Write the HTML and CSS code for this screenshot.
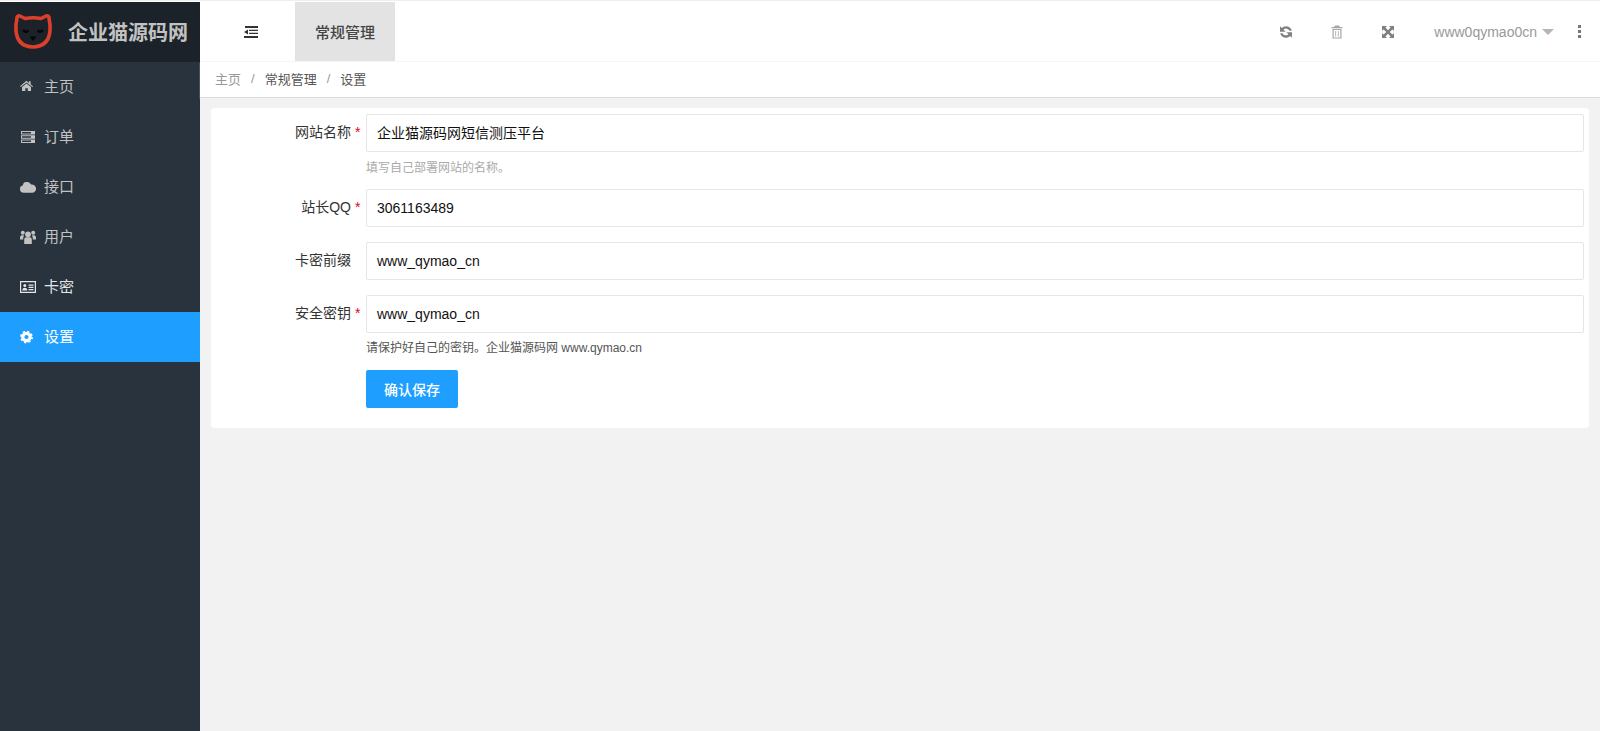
FILE: index.html
```html
<!DOCTYPE html>
<html lang="zh-CN">
<head>
<meta charset="utf-8">
<title>设置</title>
<link rel="stylesheet" href="styles.css">
</head>
<body>
<div class="app">
  <aside class="side">
    <div class="logo">
      <svg class="cat" viewBox="0 0 40 36" width="40" height="36"><path d="M4 5 Q4 2.500 7 3 L12 5.500 Q20 4 28 5.500 L33 3 Q36 2.500 36 5 Q37.500 12 37 18 Q35.500 33.500 20 34 Q4.500 33.500 3 18 Q2.500 12 4 5Z" fill="#1d2228" stroke="#dc3f2c" stroke-width="3.600" stroke-linejoin="round"/><path d="M10 17q2.500 3 5.500 .5M24.500 17.500q3 2.500 5.500 -.5" stroke="#05070a" stroke-width="2.600" fill="none"/><path d="M16.500 23.500h7l-3.500 4.500z" fill="#05070a"/></svg>
      <span class="logo-text">企业猫源码网</span>
    </div>
    <nav class="menu">
      <a class="item"><svg class="mi" viewBox="0 0 19.600 17.100" preserveAspectRatio="xMinYMid"><path d="M8 1L0 7.500l.8 1L8 3l7.200 5.500.8-1-3-2.400V1.500h-2v2z"/><path d="M8 4.200L2.500 8.700V13.500h4V10h3v3.500h4V8.700z"/></svg><span>主页</span></a>
      <a class="item"><svg class="mi" viewBox="0 0 16 14"><path fill-rule="evenodd" d="M1 1h14v3.600H1zM1 5.200h14v3.600H1zM1 9.400h14V13H1zM2 2v1.600h9V2zM2 6.200v1.600h9V6.200zM2 10.400V12h9v-1.600z"/></svg><span>订单</span></a>
      <a class="item"><svg class="mi" viewBox="0 0 16 14"><path d="M3.800 12.800a3.800 3.800 0 0 1-.9-7.500 3.600 3.600 0 0 1 4-3.300 4.200 4.200 0 0 1 4.200 2.500 4.200 4.200 0 0 1 1.500 8.300z"/></svg><span>接口</span></a>
      <a class="item"><svg class="mi" viewBox="0 0 16 14"><circle cx="8" cy="4.300" r="2.900"/><circle cx="2.800" cy="2.800" r="2"/><circle cx="13.200" cy="2.800" r="2"/><path d="M4.200 14V9.500q0-2.300 2-2.300h3.600q2 0 2 2.300V14zM0 8q0-2.800 2-2.800h2L3.200 8v1.500H0zM16 8q0-2.800-2-2.800h-2l.8 2.800v1.500H16z"/></svg><span>用户</span></a>
      <a class="item hot"><svg class="mi" viewBox="0 0 16 14"><path fill-rule="evenodd" d="M0 1h16v12H0zM1.200 2.200v9.600h13.600V2.200z"/><circle cx="4.800" cy="5.400" r="1.500"/><path d="M2.300 10.500q0-2.800 2.500-2.800t2.500 2.800zM8.500 4.500h5v1.200h-5zM8.500 6.800h5V8h-5zM8.500 9.100h5v1.200h-5z"/></svg><span>卡密</span></a>
      <a class="item active"><svg class="mi gear" viewBox="0 0 16 14"><circle cx="6.500" cy="7" r="3.700" stroke-width="3.200"/><circle cx="6.500" cy="7" r="5.600" stroke-width="1.600" stroke-dasharray="2.200 2.200"/></svg><span>设置</span></a>
    </nav>
  </aside>
  <main class="main">
    <header class="top">
      <div class="top-left">
        <div class="flex-btn"><svg viewBox="0 0 14 12" width="14" height="12"><path d="M1 0h13v2H1zM5 3.700h9v1.300H5zM5 6.700h9v1.300H5zM0 10h14v2H0zM4 3.500v5L0 6z" fill="#333"/></svg></div>
        <div class="tab">常规管理</div>
      </div>
      <div class="top-right">
        <span class="tool t1"><svg viewBox="0 0 14 14" width="14" height="14"><path d="M12.800 5.800A6 6 0 0 0 2.800 3L1 1.200v5.600h5.600L4.500 4.700a3.700 3.700 0 0 1 6 1.100zM1.200 8.200a6 6 0 0 0 10 2.800l1.800 1.800V7.200H7.400l2.100 2.100a3.700 3.700 0 0 1-6-1.100z" fill="#808080"/></svg></span>
        <span class="tool t2"><svg viewBox="0 0 12 14" width="12" height="14"><path d="M4 .5h4l1 1.500h2.500v1.200H.5V2H3zM1.500 4h9v9.500h-9zM2.700 5.100v7.300h6.600V5.100zM4.300 6h.8v5.500h-.8zM6.900 6h.8v5.500h-.8z" fill="#a6a6a6" fill-rule="evenodd"/></svg></span>
        <span class="tool t3"><svg viewBox="0 0 14 14" width="14" height="14"><path d="M1 1h5L4.400 2.600 7 5.200 9.600 2.600 8 1h5v5l-1.600-1.600L8.800 7l2.600 2.600L13 8v5H8l1.600-1.600L7 8.800l-2.600 2.600L6 13H1V8l1.600 1.600L5.200 7 2.600 4.400 1 6z" fill="#808080"/></svg></span>
        <span class="user">www0qymao0cn</span>
        <span class="caret"></span>
        <span class="dots"><i></i><i></i><i></i></span>
      </div>
    </header>
    <div class="crumb">
      <span class="c1">主页</span><span class="sep">/</span><span class="c2">常规管理</span><span class="sep">/</span><span class="c2">设置</span>
    </div>
    <section class="body">
      <form class="card">
        <div class="row first">
          <label class="lab">网站名称<b>*</b></label>
          <div class="field"><div class="inp">企业猫源码网短信测压平台</div><p class="tip">填写自己部署网站的名称。</p></div>
        </div>
        <div class="row">
          <label class="lab">站长QQ<b>*</b></label>
          <div class="field"><div class="inp">3061163489</div></div>
        </div>
        <div class="row">
          <label class="lab">卡密前缀<b class="none">*</b></label>
          <div class="field"><div class="inp">www_qymao_cn</div></div>
        </div>
        <div class="row last">
          <label class="lab">安全密钥<b>*</b></label>
          <div class="field"><div class="inp">www_qymao_cn</div><p class="tip dark">请保护好自己的密钥。企业猫源码网 www.qymao.cn</p></div>
        </div>
        <div class="row btn-row">
          <div class="lab"></div>
          <div class="field"><button type="button" class="btn">确认保存</button></div>
        </div>
      </form>
    </section>
  </main>
</div>
</body>
</html>
```
FILE: styles.css
```css
* { box-sizing: border-box; }
html, body { margin: 0; height: 100%; overflow: hidden; }
body { font-family: "Liberation Sans", "Noto Sans CJK SC", sans-serif; font-size: 14px; color: #333; background: #fff; }
.app { display: flex; height: 731px; padding-top: 2px; border-top: 1px solid #eee; }
.side { width: 200px; flex: none; background: #28333e; margin-top: -1px; }
.logo { height: 60px; background: #1c2229; display: flex; align-items: center; padding: 0 0 2px 13px; gap: 15px; }
.cat { flex: none; }
.logo-text { font-size: 20px; font-weight: 700; color: #c2c2c2; white-space: nowrap; }
.menu { display: flex; flex-direction: column; }
.item { height: 50px; display: flex; align-items: center; padding: 0 0 3px 20px; color: #c2c2c2; gap: 8px; font-size: 15px; }
.item.hot { color: #e6e6e6; }
.mi { width: 16px; height: 14px; margin-top: 3px; fill: currentColor; flex: none; }
.mi.gear { fill: none; stroke: currentColor; }
.item.active { background: #1e9fff; color: #fff; }
.main { flex: 1; min-width: 0; display: flex; flex-direction: column; margin-top: -1px; }
.top { height: 60px; display: flex; justify-content: space-between; border-bottom: 1px solid #f6f6f6; background: #fff; }
.top-left { display: flex; }
.flex-btn { width: 95px; padding-left: 7px; display: flex; align-items: center; justify-content: center; }
.tab { width: 100px; background: #e3e3e3; display: flex; align-items: center; justify-content: center; color: #444; font-size: 15px; font-weight: 500; }
.top-right { display: flex; align-items: center; color: #999; padding-right: 19px; }
.tool { display: flex; align-items: center; }
.t1 { margin-right: 38px; }
.t2 { margin-right: 38px; }
.t3 { margin-right: 39px; }
.user { font-size: 14px; }
.caret { width: 0; height: 0; border: 6px solid transparent; border-top-color: #b5b5b5; border-bottom-width: 0; margin-left: 5px; margin-right: 24px; }
.dots { display: flex; flex-direction: column; gap: 2px; }
.dots i { display: block; width: 3px; height: 3px; background: #777; }
.crumb { height: 36px; display: flex; align-items: center; padding: 0 0 2px 15px; border-bottom: 1px solid #ddd; box-shadow: 0 1px 1px #e6e6e6; background: #fff; color: #555; font-size: 13px; }
.c1 { color: #999; }
.sep { color: #999; margin: 0 10px; }
.body { flex: 1; background: #f2f2f2; padding: 10px 11px 0; }
.card { background: #fff; border-radius: 4px; height: 320px; padding: 6px 5px 0 0; }
.row { display: flex; margin-bottom: 15px; }
.row.first { margin-bottom: 13px; }
.row.last { margin-bottom: 14px; }
.lab { width: 155px; flex: none; line-height: 36px; text-align: right; color: #333; white-space: nowrap; display: block; }
.lab b { display: inline-block; width: 10px; margin-left: 4px; margin-right: 1px; font-weight: 400; color: #e2001a; text-align: left; }
.lab b.none { visibility: hidden; }
.field { flex: 1; min-width: 0; }
.inp { height: 38px; border: 1px solid #e6e6e6; border-radius: 2px; padding-left: 10px; line-height: 36px; color: #111; background: #fff; }
.tip { margin: 8px 0 0; font-size: 12px; line-height: 16px; color: #aaa; }
.tip.dark { margin-top: 7px; color: #555; }
.btn { display: block; width: 92px; height: 38px; border: 0; border-radius: 2px; background: #1e9fff; color: #fff; font: 500 14px "Liberation Sans", "Noto Sans CJK SC", sans-serif; padding: 0; }
```
